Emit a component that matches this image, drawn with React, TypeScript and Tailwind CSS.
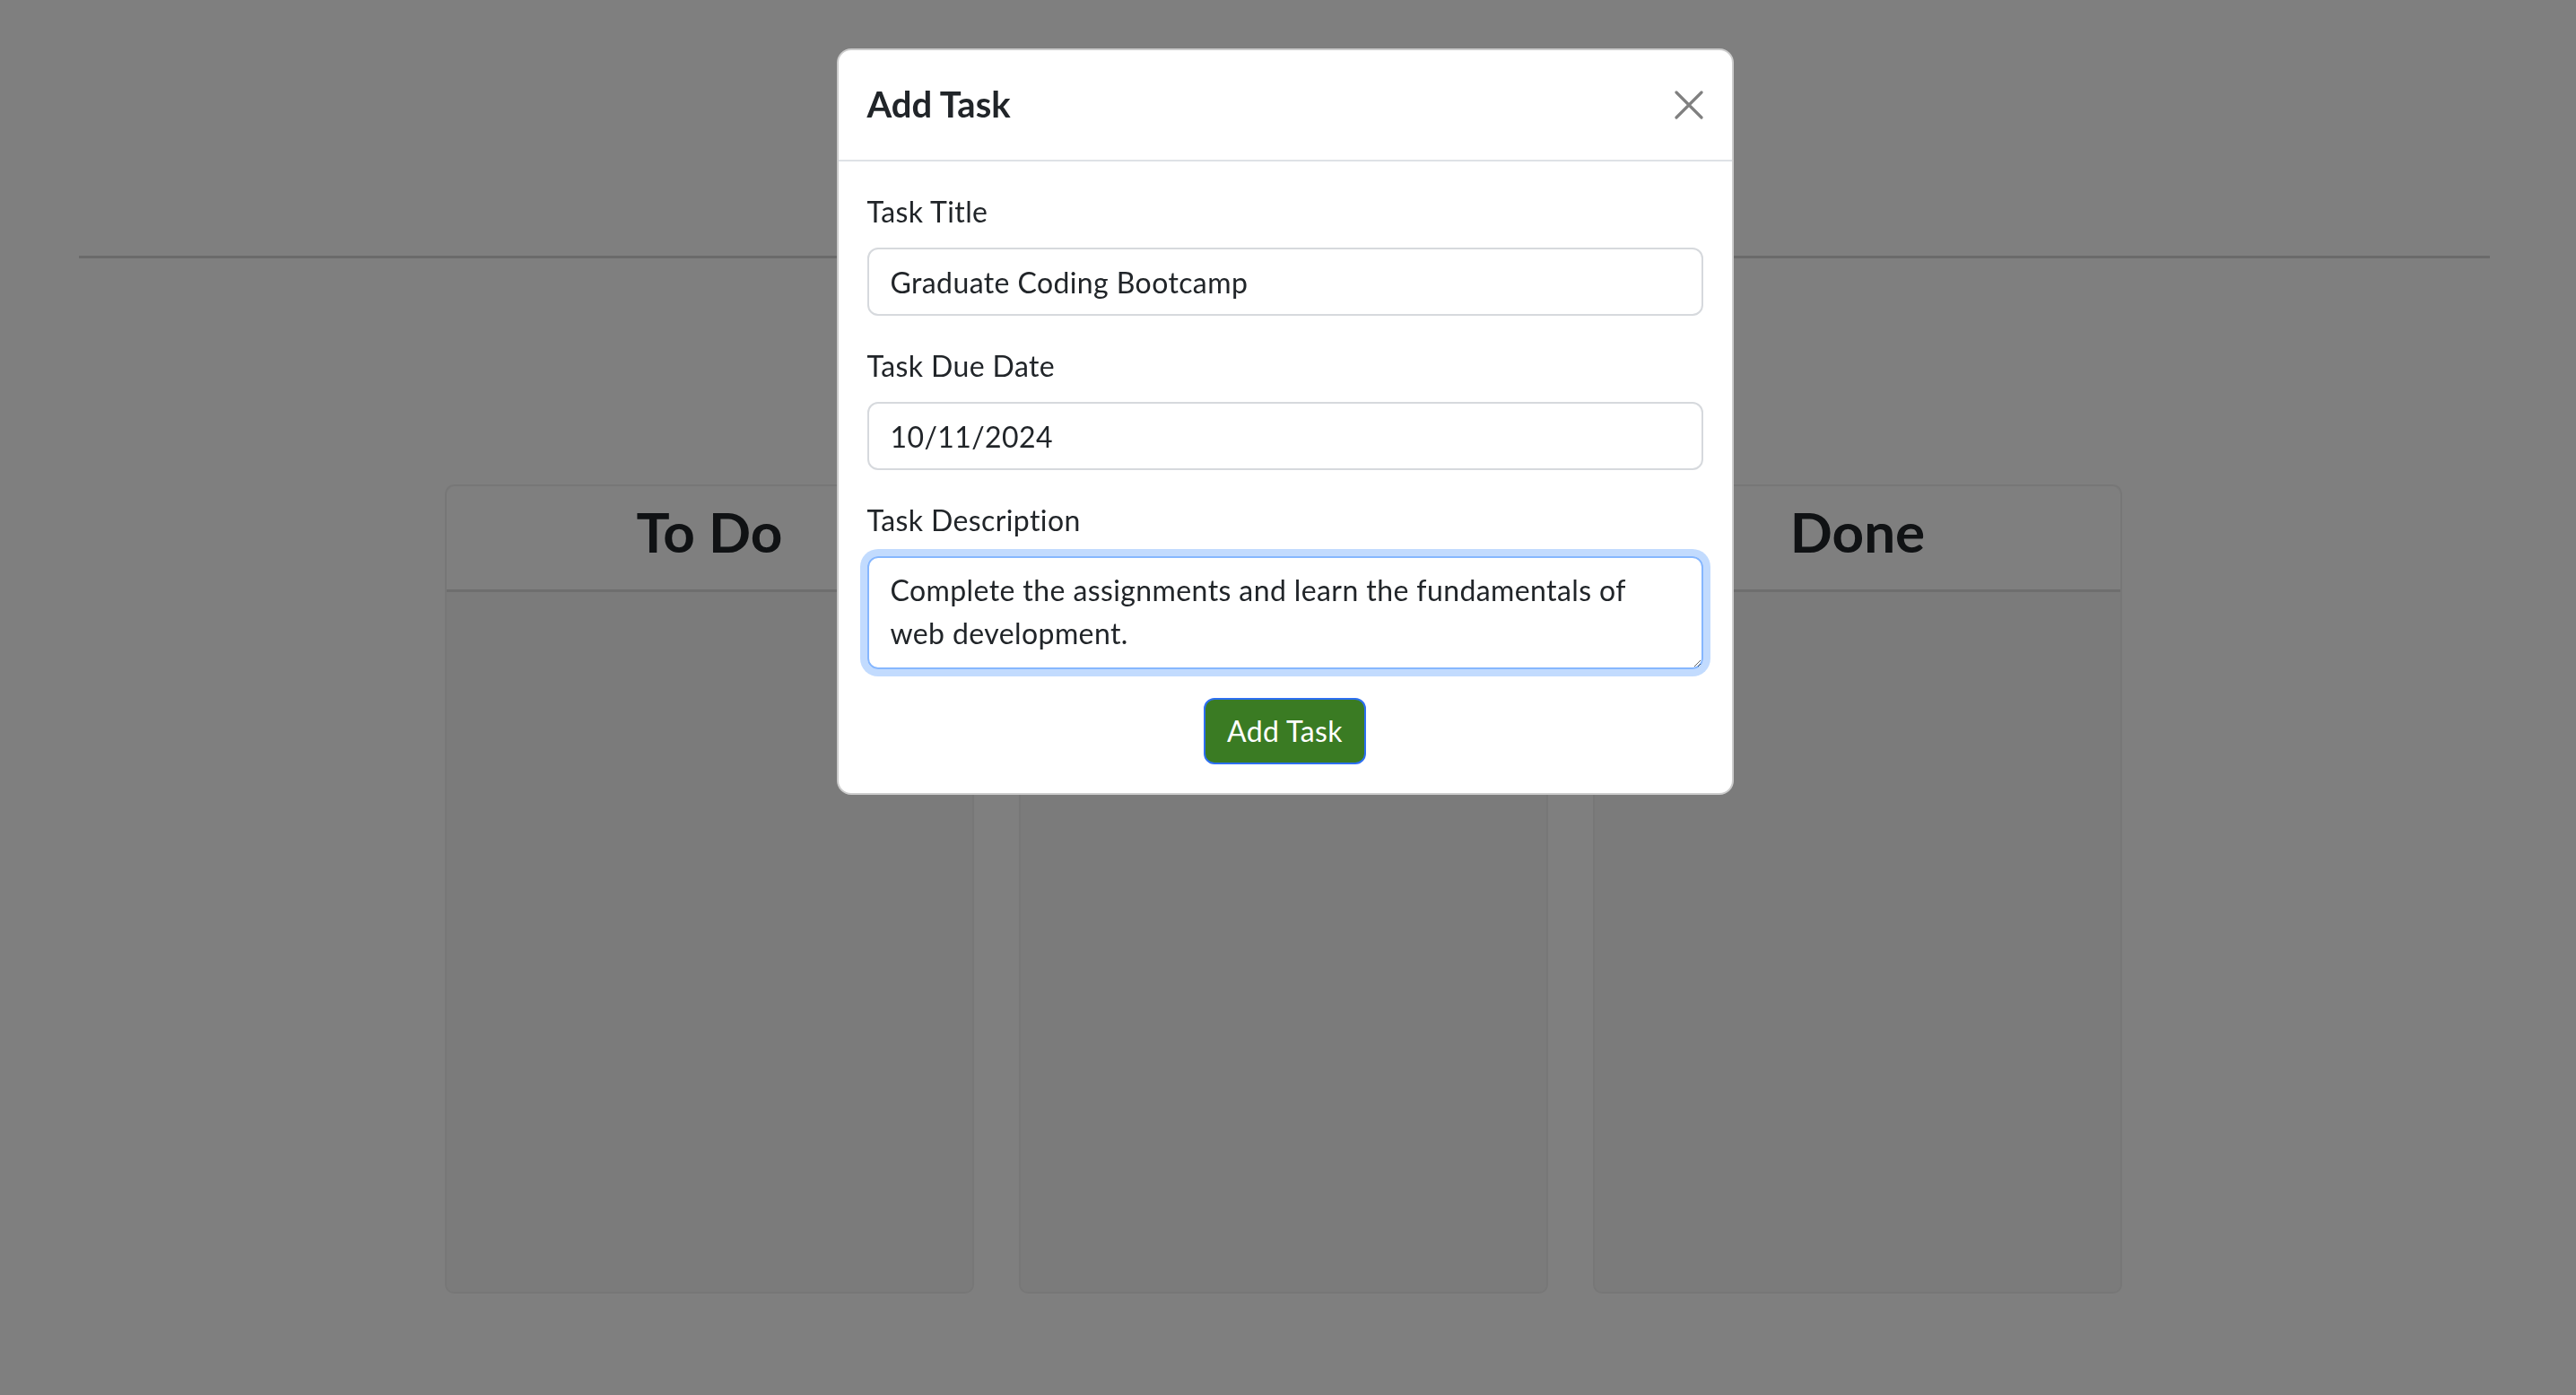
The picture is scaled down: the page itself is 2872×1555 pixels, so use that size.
import { useEffect, useRef } from "react"

export default function App() {
  const descRef = useRef<HTMLTextAreaElement>(null)

  useEffect(() => {
    const el = descRef.current
    if (el) {
      el.focus()
      el.setSelectionRange(13, 13)
    }
  }, [])

  const columns = ["To Do", "In Progress", "Done"]

  return (
    <div className="relative min-h-screen bg-white text-[#212529] font-['Lato',sans-serif]">
      {/* Page header */}
      <header className="ml-[88px] mr-[96px] h-[288px] border-b-[3px] border-[#d4d4d4] flex flex-col items-center justify-center">
        <h1 className="text-[72px] font-bold">Task Board</h1>
      </header>

      {/* Board columns */}
      <div className="ml-[496px] mt-[252px] flex gap-[50px]">
        {columns.map((name) => (
          <div key={name} className="w-[590px] h-[902px] bg-[#f6f6f6] border-2 border-[#efefef] rounded-[10px] flex flex-col">
            <div className="h-[118px] pb-[16px] bg-white rounded-t-[10px] border-b-[3px] border-[#dcdcdc] flex items-center justify-center">
              <h2 className="text-[62px] font-bold leading-none">{name}</h2>
            </div>
            <div className="flex-1" />
          </div>
        ))}
      </div>

      {/* Backdrop + modal */}
      <div className="fixed inset-0 bg-black/50 flex justify-center items-start pt-[54px] pr-[7px]">
        <div className="w-[1000px] bg-white border-2 border-black/20 rounded-[16px]">
          <div className="flex items-center justify-between p-8 border-b-2 border-[#dee2e6]">
            <h5 className="text-[40px] font-bold leading-[60px] -mt-[2px]">Add Task</h5>
            <button className="w-8 h-8 flex items-center justify-center">
              <svg viewBox="0 0 32 32" className="w-8 h-8" fill="none" stroke="#808080" strokeWidth="3.2" strokeLinecap="round">
                <path d="M2 2 L30 30 M30 2 L2 30" />
              </svg>
            </button>
          </div>

          <div className="p-8 text-[32px] tracking-[0.4px]">
            <div className="mb-8">
              <label className="block leading-[48px] mb-4">Task Title</label>
              <input
                type="text"
                defaultValue="Graduate Coding Bootcamp"
                className="w-full h-[76px] px-6 border-2 border-[#d6d9dd] rounded-[12px] leading-[48px] outline-none"
              />
            </div>
            <div className="mb-8">
              <label className="block leading-[48px] mb-4">Task Due Date</label>
              <input
                type="text"
                defaultValue="10/11/2024"
                className="w-full h-[76px] px-6 border-2 border-[#d6d9dd] rounded-[12px] leading-[48px] outline-none"
              />
            </div>
            <div className="mb-8">
              <label className="block leading-[48px] mb-4">Task Description</label>
              <textarea
                ref={descRef}
                rows={2}
                defaultValue="Complete the assignments and learn the fundamentals of web development."
                className="block w-full h-[126px] px-6 py-3 border-2 border-[#86b7fe] rounded-[12px] leading-[48px] outline-none shadow-[0_0_0_8px_rgba(13,110,253,0.25)] caret-[#212529]"
              />
            </div>
            <div className="flex justify-center">
              <button className="h-[74px] px-6 bg-[#3a7b23] text-white border-2 border-[#2d6ff0] rounded-[12px] leading-[48px]">
                Add Task
              </button>
            </div>
          </div>
        </div>
      </div>
    </div>
  )
}
